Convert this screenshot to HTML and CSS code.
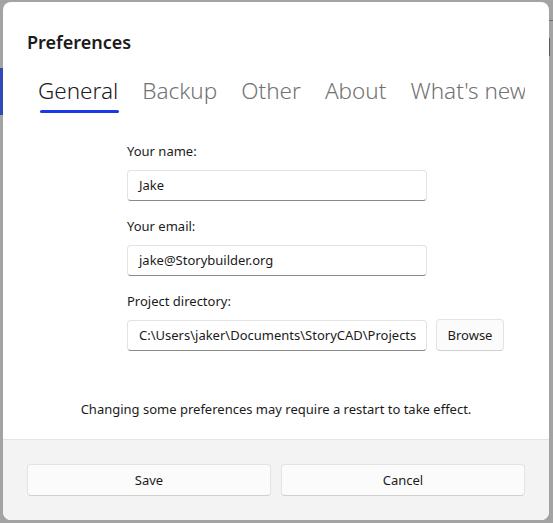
FILE: index.html
```html
<!DOCTYPE html>
<html>
<head>
<meta charset="utf-8">
<link rel="stylesheet" href="styles.css">
</head>
<body>
<div class="backdrop-left"><div class="sel"></div></div>
<div class="dialog">
  <div class="content">
    <div class="title">Preferences</div>
    <div class="tabs">
      <div class="tab active">General</div>
      <div class="tab">Backup</div>
      <div class="tab">Other</div>
      <div class="tab">About</div>
      <div class="tab">What's new</div>
    </div>
    <div class="form">
      <label class="lbl">Your name:</label>
      <div class="input">Jake</div>
      <label class="lbl">Your email:</label>
      <div class="input">jake@Storybuilder.org</div>
      <label class="lbl">Project directory:</label>
      <div class="row">
        <div class="input dir">C:\Users\jaker\Documents\StoryCAD\Projects</div>
        <div class="btn browse">Browse</div>
      </div>
    </div>
    <div class="notice">Changing some preferences may require a restart to take effect.</div>
  </div>
  <div class="footer">
    <div class="btn">Save</div>
    <div class="btn">Cancel</div>
  </div>
</div>
<div class="backdrop-right"><div class="line"></div><div class="bar"></div></div>
</body>
</html>
```

FILE: styles.css
```css
html, body {
  margin: 0;
  padding: 0;
}
body {
  width: 553px;
  height: 523px;
  overflow: hidden;
  background: #a3a3a3;
  display: flex;
  font-family: "Noto Sans", "Open Sans", sans-serif;
  color: #1b1b1b;
}
.backdrop-left {
  width: 3px;
  flex: none;
}
.backdrop-left .sel {
  margin-top: 68px;
  height: 47px;
  background: #3148b8;
}
.backdrop-right {
  flex: 1;
}
.backdrop-right .line {
  margin-top: 20px;
  height: 1px;
  background: #6e6e6e;
}
.backdrop-right .bar {
  margin-top: 17px;
  width: 1px;
  height: 18px;
  background: #5a5a5a;
}
.dialog {
  flex: none;
  margin-top: 2px;
  width: 546px;
  height: 518px;
  border-radius: 8px;
  background: #ffffff;
  display: flex;
  flex-direction: column;
  overflow: hidden;
}
.content {
  flex: 1;
  padding: 26px 24px 0 24px;
  display: flex;
  flex-direction: column;
}
.title {
  font-size: 18px;
  font-weight: 600;
  line-height: 28px;
}
.tabs {
  display: flex;
  gap: 24px;
  margin-top: 19px;
  padding-left: 11px;
  overflow: hidden;
  white-space: nowrap;
  width: 487px;
}
.tab {
  font-size: 22.5px;
  font-weight: 300;
  color: #737373;
  line-height: 32px;
  padding-bottom: 10px;
  position: relative;
  flex: none;
}
.tab.active {
  color: #1b1b1b;
}
.tab.active::after {
  content: "";
  position: absolute;
  left: 2px;
  right: -1px;
  bottom: 4px;
  height: 3px;
  border-radius: 2px;
  background: #1a37e8;
}
.form {
  margin-top: 25px;
  margin-left: 100px;
  display: flex;
  flex-direction: column;
  align-items: flex-start;
}
.lbl {
  font-size: 13px;
  line-height: 19px;
  margin-bottom: 9px;
}
.input {
  box-sizing: border-box;
  width: 300px;
  height: 31px;
  border: 1px solid #e3e3e3;
  border-bottom-color: #8a8a8a;
  border-radius: 4px;
  padding: 0 11px;
  font-size: 13px;
  line-height: 29px;
  margin-bottom: 16px;
  white-space: nowrap;
  overflow: hidden;
}
.row {
  display: flex;
  align-items: flex-start;
  gap: 9px;
}
.btn {
  box-sizing: border-box;
  height: 32px;
  border: 1px solid #e3e3e3;
  border-bottom-color: #d0d0d0;
  border-radius: 4px;
  background: #fbfbfb;
  font-size: 13px;
  display: flex;
  align-items: center;
  justify-content: center;
}
.browse {
  width: 68px;
  margin-top: -1px;
}
.notice {
  margin-top: 33px;
  text-align: center;
  font-size: 13px;
  line-height: 19px;
}
.footer {
  flex: none;
  height: 81px;
  box-sizing: border-box;
  border-top: 1px solid #e5e5e5;
  background: #f3f3f3;
  padding: 0 24px;
  display: grid;
  grid-template-columns: 1fr 1fr;
  column-gap: 10px;
  align-items: center;
}
```
